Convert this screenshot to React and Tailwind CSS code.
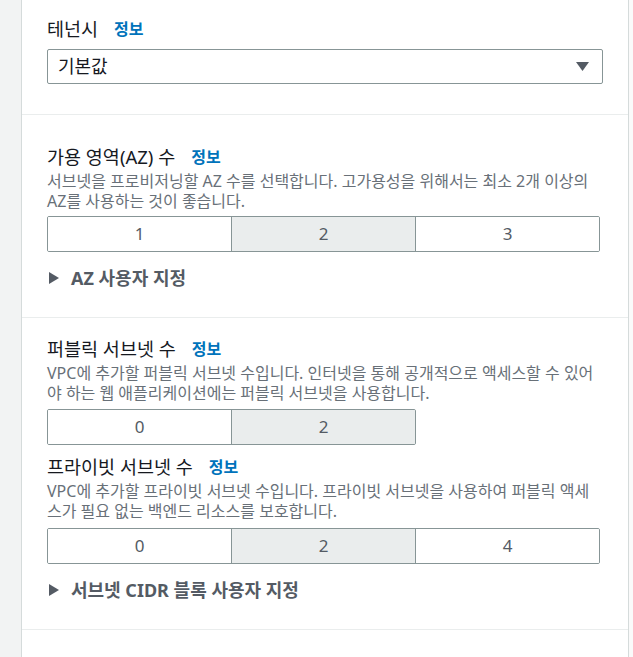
import { useState } from 'react';

const font = { fontFamily: '"Noto Sans", "Noto Sans CJK KR", sans-serif' };

const InfoLink = () => (
    <a className="ml-[16px] text-[16px] font-bold text-[#0073bb]">정보</a>
);

const Segmented = ({ options, value, onChange, width }) => (
    <div className={`flex h-[36px] border border-[#879596] rounded-[2px] overflow-hidden ${width}`}>
        {options.map((opt, i) => (
            <button
                key={opt}
                onClick={() => onChange(opt)}
                className={`flex-1 flex items-center justify-center text-[17px] text-[#545b64] ${i > 0 ? 'border-l border-[#879596]' : ''} ${value === opt ? 'bg-[#eaeded]' : 'bg-white'}`}
            >
                {opt}
            </button>
        ))}
    </div>
);

const Expander = ({ label }) => (
    <div className="flex items-center h-[22px] mt-[15px]">
        <svg width="10" height="12" viewBox="0 0 10 12" className="ml-[2px]">
            <path d="M0 0 L10 6 L0 12 Z" fill="#545b64" />
        </svg>
        <span className="ml-[12px] text-[18px] font-bold text-[#545b64]">{label}</span>
    </div>
);

const Label = ({ children }) => (
    <div className="flex items-center h-[22px] text-[18.5px] text-[#16191f]">
        {children}
        <InfoLink />
    </div>
);

const Desc = ({ children }) => (
    <p className="mt-[3px] text-[16px] leading-[20px] text-[#687078] whitespace-nowrap">{children}</p>
);

export default function App() {
    const [az, setAz] = useState('2');
    const [pub, setPub] = useState('2');
    const [priv, setPriv] = useState('2');

    return (
        <div className="flex w-[633px] h-[657px] bg-white overflow-hidden" style={font}>
            <div className="w-[21px] bg-[#f2f3f3] shrink-0" />
            <div className="w-[608px] shrink-0 border-l border-r border-[#d5dbdb] bg-white">
                {/* tenancy */}
                <div className="px-[25px] pt-[18px] pb-[30px] border-b border-[#eaeded]">
                    <Label>테넌시</Label>
                    <div className="mt-[9px] h-[35px] border border-[#879596] rounded-[2px] flex items-center justify-between pl-[10px] pr-[13px]">
                        <span className="text-[18px] text-[#16191f]">기본값</span>
                        <svg width="13" height="9" viewBox="0 0 13 9">
                            <path d="M0 0 L13 0 L6.5 9 Z" fill="#545b64" />
                        </svg>
                    </div>
                </div>

                {/* AZ */}
                <div className="px-[25px] pt-[31px] pb-[28px] border-b border-[#eaeded]">
                    <Label>가용 영역(AZ) 수</Label>
                    <Desc>
                        서브넷을 프로비저닝할 AZ 수를 선택합니다. 고가용성을 위해서는 최소 2개 이상의
                        <br />
                        AZ를 사용하는 것이 좋습니다.
                    </Desc>
                    <div className="mt-[5px]">
                        <Segmented options={['1', '2', '3']} value={az} onChange={setAz} width="w-[553px]" />
                    </div>
                    <Expander label="AZ 사용자 지정" />
                </div>

                {/* subnets */}
                <div className="px-[25px] pt-[20px] pb-[28px] border-b border-[#eaeded]">
                    <Label>퍼블릭 서브넷 수</Label>
                    <Desc>
                        VPC에 추가할 퍼블릭 서브넷 수입니다. 인터넷을 통해 공개적으로 액세스할 수 있어
                        <br />
                        야 하는 웹 애플리케이션에는 퍼블릭 서브넷을 사용합니다.
                    </Desc>
                    <div className="mt-[6px]">
                        <Segmented options={['0', '2']} value={pub} onChange={setPub} width="w-[369px]" />
                    </div>
                    <div className="mt-[11px]">
                        <Label>프라이빗 서브넷 수</Label>
                    </div>
                    <Desc>
                        VPC에 추가할 프라이빗 서브넷 수입니다. 프라이빗 서브넷을 사용하여 퍼블릭 액세
                        <br />
                        스가 필요 없는 백엔드 리소스를 보호합니다.
                    </Desc>
                    <div className="mt-[7px]">
                        <Segmented options={['0', '2', '4']} value={priv} onChange={setPriv} width="w-[553px]" />
                    </div>
                    <Expander label="서브넷 CIDR 블록 사용자 지정" />
                </div>
            </div>
            <div className="flex-1 bg-[#fafafa]" />
        </div>
    );
}
